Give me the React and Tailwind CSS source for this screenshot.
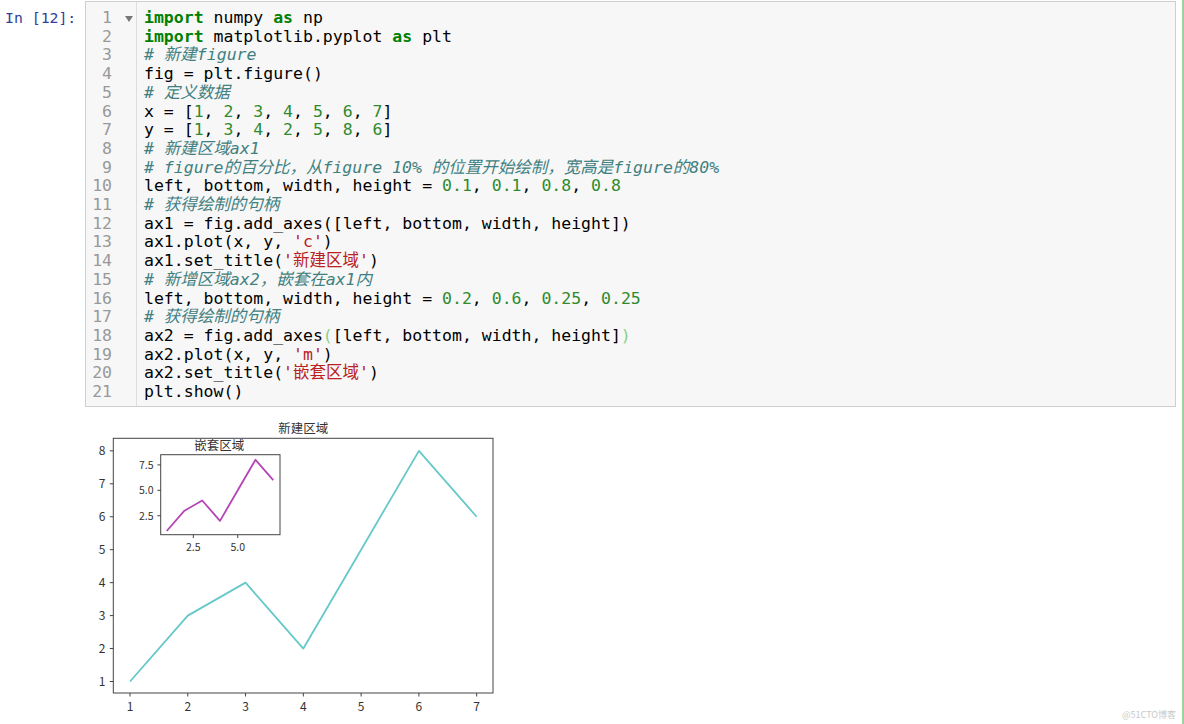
import React from "react";

const K = "font-bold text-[#008000]";
const N = "text-[#2f8a2f]";
const C = "italic text-[#408080]";
const S = "text-[#ba2121]";
const B = "text-[#86d086]";

// each line: list of [text, class]
const lines = [
  [["import", K], [" numpy "], ["as", K], [" np"]],
  [["import", K], [" matplotlib.pyplot "], ["as", K], [" plt"]],
  [["# 新建figure", C]],
  [["fig = plt.figure()"]],
  [["# 定义数据", C]],
  [["x = ["], ["1", N], [", "], ["2", N], [", "], ["3", N], [", "], ["4", N], [", "], ["5", N], [", "], ["6", N], [", "], ["7", N], ["]"]],
  [["y = ["], ["1", N], [", "], ["3", N], [", "], ["4", N], [", "], ["2", N], [", "], ["5", N], [", "], ["8", N], [", "], ["6", N], ["]"]],
  [["# 新建区域ax1", C]],
  [["# figure的百分比，从figure 10% 的位置开始绘制，宽高是figure的80%", C]],
  [["left, bottom, width, height = "], ["0.1", N], [", "], ["0.1", N], [", "], ["0.8", N], [", "], ["0.8", N]],
  [["# 获得绘制的句柄", C]],
  [["ax1 = fig.add_axes([left, bottom, width, height])"]],
  [["ax1.plot(x, y, "], ["'c'", S], [")"]],
  [["ax1.set_title("], ["'新建区域'", S], [")"]],
  [["# 新增区域ax2，嵌套在ax1内", C]],
  [["left, bottom, width, height = "], ["0.2", N], [", "], ["0.6", N], [", "], ["0.25", N], [", "], ["0.25", N]],
  [["# 获得绘制的句柄", C]],
  [["ax2 = fig.add_axes"], ["(", B], ["[left, bottom, width, height]"], [")", B]],
  [["ax2.plot(x, y, "], ["'m'", S], [")"]],
  [["ax2.set_title("], ["'嵌套区域'", S], [")"]],
  [["plt.show()"]],
];

const mono = "font-['DejaVu_Sans_Mono','Noto_Sans_CJK_SC',monospace]";

const X = (x) => 50 + (x - 1) * 57.78;
const Y = (y) => 270.5 - (y - 1) * 32.95;
const Xi = (x) => 86.7 + (x - 1) * 17.76;
const Yi = (y) => 120 - (y - 1) * 10.17;
const xs = [1, 2, 3, 4, 5, 6, 7];
const ys = [1, 3, 4, 2, 5, 8, 6];

function Chart() {
  const main = xs.map((x, i) => `${X(x)},${Y(ys[i])}`).join(" ");
  const inset = xs.map((x, i) => `${Xi(x)},${Yi(ys[i])}`).join(" ");
  return (
    <svg width="420" height="312" viewBox="0 0 420 312" className="block">
      <g fontFamily="'Noto Sans CJK SC','Noto Sans',sans-serif" fill="#333">
        <text x="223.3" y="21.5" fontSize="12.5" textAnchor="middle">新建区域</text>
        <rect x="33.3" y="27.3" width="379.7" height="254.7" fill="#fff" stroke="#444" strokeWidth="1" />
        <polyline points={main} fill="none" stroke="#66c8c8" strokeWidth="1.8" strokeLinejoin="round" />
        {xs.map((x) => (
          <g key={"x" + x}>
            <line x1={X(x)} y1="282" x2={X(x)} y2="285.5" stroke="#444" />
            <text x={X(x)} y="299.5" fontSize="12" textAnchor="middle">{x}</text>
          </g>
        ))}
        {[1, 2, 3, 4, 5, 6, 7, 8].map((y) => (
          <g key={"y" + y}>
            <line x1="29.8" y1={Y(y)} x2="33.3" y2={Y(y)} stroke="#444" />
            <text x="25.5" y={Y(y) + 4.2} fontSize="12" textAnchor="end">{y}</text>
          </g>
        ))}

        <text x="139.2" y="38.5" fontSize="12.5" textAnchor="middle">嵌套区域</text>
        <rect x="80.7" y="43.7" width="119.3" height="80" fill="#fff" stroke="#444" strokeWidth="1" />
        <polyline points={inset} fill="none" stroke="#b545b5" strokeWidth="1.8" strokeLinejoin="round" />
        {[2.5, 5].map((x) => (
          <g key={"xi" + x}>
            <line x1={Xi(x)} y1="123.7" x2={Xi(x)} y2="127" stroke="#444" />
            <text x={Xi(x)} y="140" fontSize="10.5" textAnchor="middle">{x.toFixed(1)}</text>
          </g>
        ))}
        {[2.5, 5, 7.5].map((y) => (
          <g key={"yi" + y}>
            <line x1="77.4" y1={Yi(y)} x2="80.7" y2={Yi(y)} stroke="#444" />
            <text x="73.5" y={Yi(y) + 3.8} fontSize="10.5" textAnchor="end">{y.toFixed(1)}</text>
          </g>
        ))}
      </g>
    </svg>
  );
}

export default function App() {
  return (
    <div className="relative w-[1184px] h-[724px] bg-white overflow-hidden border-r-2 border-[#9ad49a]">
      {/* input cell */}
      <div className="flex pt-[1px]">
        <div className={`w-[85px] shrink-0 pl-[5px] pt-[8px] text-[14.8px] leading-[18.7px] text-[#303f9f] ${mono}`}>
          In [12]:
        </div>
        <div className="w-[1091px] h-[406px] flex border border-[#cfcfcf] bg-[#f7f7f7]">
          {/* gutter */}
          <div className={`flex w-[51px] shrink-0 border-r border-[#dddddd] pt-[7px] text-[16.5px] leading-[18.7px] text-[#999] ${mono}`}>
            <div className="w-[26px] text-right">
              {lines.map((_, i) => (
                <div key={i}>{i + 1}</div>
              ))}
            </div>
            <div className="flex-1 pl-[13px] pt-[7px]">
              <svg width="8" height="6" viewBox="0 0 8 6">
                <path d="M0 0 H8 L4 6 Z" fill="#777" />
              </svg>
            </div>
          </div>
          {/* code */}
          <div className={`flex-1 pl-[7px] pt-[7px] text-[16.5px] leading-[18.7px] text-black whitespace-pre ${mono}`}>
            {lines.map((line, i) => (
              <div key={i}>
                {line.map(([t, cls], j) => (
                  <span key={j} className={cls}>
                    {t}
                  </span>
                ))}
              </div>
            ))}
          </div>
        </div>
      </div>

      {/* output */}
      <div className="mt-[4px] ml-[80px]">
        <Chart />
      </div>

      <div className="absolute right-[6px] bottom-[3px] text-[9px] text-[#c8c8c8] font-['Noto_Sans_CJK_SC',sans-serif]">
        @51CTO博客
      </div>
    </div>
  );
}
